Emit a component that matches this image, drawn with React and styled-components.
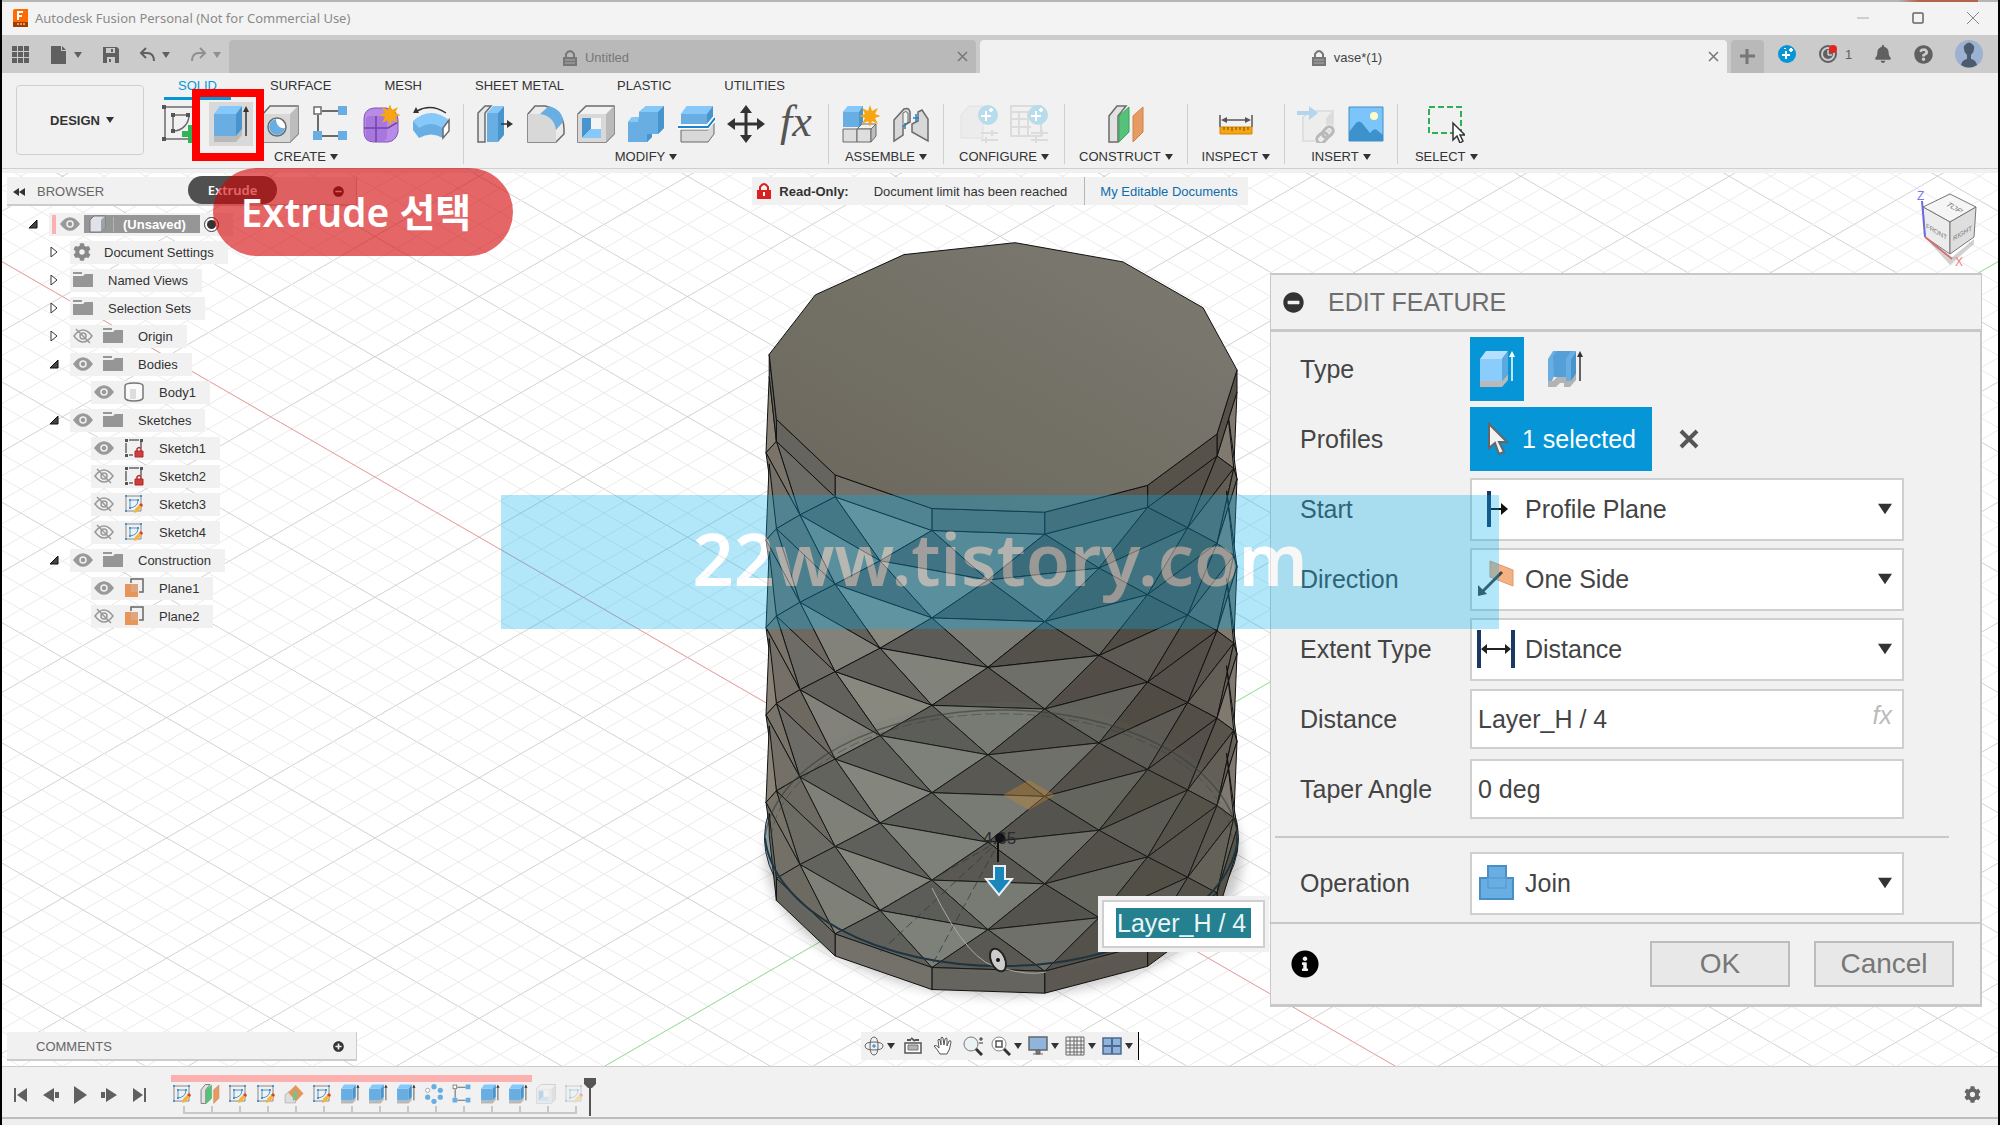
import React, { useState } from 'react';
import styled, { createGlobalStyle, css } from 'styled-components';
import { FaBell, FaCog, FaInfoCircle, FaMinusCircle, FaPlusCircle, FaQuestionCircle } from 'react-icons/fa';

const GlobalStyle = createGlobalStyle`
  * {
    box-sizing: border-box;
  }
  body {
    margin: 0;
    background: #000;
    color: #333;
    font-family: "Liberation Sans", Arial, sans-serif;
    font-size: 13px;
  }
  button, input, select {
    font: inherit;
    color: inherit;
  }
`;

const BLUE = '#68aee3';
const LIGHT = '#86c8fa';
const DEEP = '#4795cc';
const GREY = '#d8d8d8';
const LINE = '#6b6b6b';

/* ---------- icons ---------- */

const Icon = ({ size = 38, box = 38, children, ...rest }) => (
  <svg width={size} height={size} viewBox={`0 0 ${box} ${box}`} fill="none" aria-hidden="true" {...rest}>
    {children}
  </svg>
);

const Caret = ({ size = 8, color = '#333' }) => (
  <svg width={size} height={size} viewBox="0 0 8 8" aria-hidden="true">
    <path d="M0 1h8L4 7z" fill={color} />
  </svg>
);

const SketchIcon = (props) => (
  <Icon {...props}>
    <path d="M4 2h30M4 34h30M3 3v30" stroke={LINE} strokeWidth="1.5" />
    <path d="M11 10h16c0 9-7 16-16 16z" stroke={LINE} strokeWidth="1.5" />
    <path d="M0 0h4v4H0zM0 32h4v4H0zM9 8h4v4H9zM9 24h4v4H9zM24 8h4v4h-4z" fill="#555" />
    <path d="M26 20h6v6h6v6h-6v6h-6v-6h-6v-6h6z" fill="#2fb457" />
  </Icon>
);

const ExtrudeIcon = ({ arrow = '#333', front = BLUE, top = LIGHT, side = DEEP, ...props }) => (
  <Icon {...props}>
    <path d="M2 31h22l6-7v6l-6 7H2z" fill="#b9b9b9" />
    <path d="M2 9h22v22H2z" fill={front} />
    <path d="M2 9l6-8h22l-6 8z" fill={top} />
    <path d="M24 9l6-8v23l-6 7z" fill={side} />
    <path d="M34 31V5" stroke={arrow} strokeWidth="1.5" />
    <path d="M31 7l3-6 3 6z" fill={arrow} />
  </Icon>
);

const ThinExtrudeIcon = (props) => (
  <Icon {...props}>
    <path d="M2 31h5l4-4h11v4h3l5-7v6l-6 7h-6v-4h-4l-4 4H2z" fill="#b3b3b3" />
    <path d="M2 9l5-8h6v23H9l-3 7H2z" fill={BLUE} />
    <path d="M7 6l4-5h15l-5 7v19H8z" fill="#559fd9" />
    <path d="M20 9l5-8h5l-5 8v22h-5z" fill={BLUE} />
    <path d="M25 9l5-8v23l-5 7z" fill={DEEP} />
    <path d="M34 31V5" stroke="#333" strokeWidth="1.5" />
    <path d="M31 7l3-6 3 6z" fill="#333" />
  </Icon>
);

const HoleIcon = () => (
  <Icon>
    <path d="M1 9l7-8h28v28l-8 8H1z" fill="#ececec" stroke={LINE} strokeWidth="1.5" />
    <path d="M28 9l8-8v28l-8 8z" fill="#bcbcbc" />
    <path d="M1 9h27v28H1z" fill={GREY} />
    <circle cx="15" cy="22" r="9" fill="#fff" stroke={LINE} strokeWidth="1.5" />
    <path d="M14 14a8 8 0 1 0 9 9c-5 1-9-3-9-9z" fill={BLUE} />
  </Icon>
);

const PatternIcon = (props) => (
  <Icon {...props}>
    <path d="M10 6h16M6 10v16M10 31h16" stroke={LINE} strokeWidth="2" />
    <rect x="2" y="2" width="7" height="7" fill="#fff" stroke={LINE} strokeWidth="1.5" />
    <path d="M26 1h9v9h-9zM1 26h9v9H1zM26 26h9v9h-9z" fill={BLUE} />
  </Icon>
);

const Star = ({ x, y }) => (
  <path
    transform={`translate(${x} ${y})`}
    d="M0-10l2 6 6-3-3 6 6 2-6 2 3 6-6-3-2 6-2-6-6 3 3-6-6-2 6-2-3-6 6 3z"
    fill="#f7a511"
  />
);

const FormIcon = () => (
  <Icon>
    <path d="M2 14Q2 4 12 3h12q12 2 12 12v12q-2 9-10 10H12Q2 37 2 27z" fill="#b78be6" stroke="#8254b8" />
    <path d="M4 15q0-4 5-4h12q4 0 4 4v16q0 4-4 5H9q-5-1-5-5z" fill="#a877dd" />
    <path d="M14 11v26M2 23h24l10-6M26 12l6-6" stroke="#7444ab" strokeWidth="1.5" />
    <Star x={28} y={9} />
  </Icon>
);

const BendIcon = () => (
  <Icon>
    <path d="M1 16q18-16 37 0l-5 8q-13-9-27 0z" fill={LIGHT} />
    <path d="M1 16l6 7v10l-6-8zM7 23q12-8 24 0v10q-12-7-24 0z" fill={BLUE} />
    <path d="M31 23l6-8v11l-6 7z" fill="#fff" stroke={LINE} strokeWidth="1.5" />
    <path d="M5 6q14-8 29 2" stroke="#333" strokeWidth="1.5" />
    <path d="M1 8l3-6 3 6z" fill="#333" />
  </Icon>
);

const PressPullIcon = () => (
  <Icon>
    <path d="M1 8l7-7h6l-6 7v29H1z" fill="#e8e8e8" stroke={LINE} strokeWidth="1.5" />
    <path d="M10 8h11v29H10z" fill={BLUE} />
    <path d="M10 8l6-7h11l-6 7z" fill={LIGHT} />
    <path d="M21 8l6-7v29l-6 7z" fill={DEEP} />
    <path d="M24 19h8" stroke="#333" strokeWidth="1.5" />
    <path d="M30 15l6 4-6 4z" fill="#333" />
  </Icon>
);

const FilletIcon = () => (
  <Icon>
    <path d="M1 9l7-8h10q18 4 19 22v6l-8 8H1z" fill="#ebebeb" stroke={LINE} strokeWidth="1.5" />
    <path d="M1 9h12q15 2 16 16v12H1z" fill={GREY} />
    <path d="M13 9l9-8q14 4 14 16l-7 8Q27 11 13 9z" fill={BLUE} />
  </Icon>
);

const ShellIcon = (props) => (
  <Icon {...props}>
    <path d="M1 9l8-8h28v28l-8 8H1z" fill="#f2f2f2" stroke={LINE} strokeWidth="1.5" />
    <path d="M29 9l8-8v28l-8 8z" fill="#bababa" />
    <path d="M1 9h28v28H1z" fill={GREY} />
    <path d="M5 13h19v20H5z" fill="#f4f4f4" />
    <path d="M5 13h9v11l-9 9z" fill={DEEP} />
    <path d="M14 24h10v9H5z" fill={LIGHT} />
  </Icon>
);

const CombineIcon = () => (
  <Icon>
    <path d="M1 17l4-5h7V7l7-6h18v22l-6 6h-6v3l-5 5H1z" fill={BLUE} />
    <path d="M1 17l4-5h7l-1 5zM12 7l7-6h18l-6 6z" fill={LIGHT} />
    <path d="M31 7l6-6v22l-6 6zM20 29h5v3l-5 5z" fill={DEEP} />
  </Icon>
);

const SplitIcon = () => (
  <Icon>
    <path d="M4 9l6-8h26l-6 8v10H4z" fill={BLUE} />
    <path d="M4 9l6-8h26l-6 8z" fill={LIGHT} />
    <path d="M30 9l6-8v11l-6 7z" fill={DEEP} />
    <path d="M4 25h27l6-7v11l-6 8H4z" fill={GREY} stroke={LINE} />
    <path d="M1 22h30l7-9" stroke="#fff" strokeWidth="5" />
    <path d="M1 22h30l7-9" stroke="#1c83cc" strokeWidth="2" />
  </Icon>
);

const MoveIcon = () => (
  <Icon>
    <path d="M19 4v30M4 19h30" stroke="#333" strokeWidth="3" />
    <path d="M19 0l6 8H13zM19 38l6-8H13zM0 19l8-6v12zM38 19l-8-6v12z" fill="#333" />
  </Icon>
);

const AssembleIcon = () => (
  <Icon>
    <path d="M1 7l5-6h15l-4 6v15H1z" fill={BLUE} />
    <path d="M1 7l5-6h15l-4 6z" fill={LIGHT} />
    <path d="M17 7l4-6v16l-4 6z" fill={DEEP} />
    <path d="M1 24h14v13H1z" fill="#dedede" stroke={LINE} />
    <path d="M15 24l5-5h14l-5 5z" fill="#f1f1f1" stroke={LINE} />
    <path d="M15 24h14v13H15z" fill="#dedede" stroke={LINE} />
    <path d="M29 24l5-5v12l-5 6z" fill="#bdbdbd" stroke={LINE} />
    <Star x={28} y={10} />
  </Icon>
);

const JointIcon = () => (
  <Icon>
    <path d="M2 15L12 4q5-2 6 3v10l-7 4v9l-9 6z" fill={GREY} stroke={LINE} strokeWidth="1.5" />
    <path d="M11 8q3-3 5 0v9l-5 4z" fill="#f1f1f1" stroke={LINE} />
    <path d="M36 36V14L30 5l-4 2v9l-6 3v8z" fill={GREY} stroke={LINE} strokeWidth="1.5" />
    <path d="M13 18v6M24 9v8M21 13h6" stroke="#1c83cc" strokeWidth="1.5" />
  </Icon>
);

const ConfigureIcon = ({ table }) => (
  <Icon>
    {table ? (
      <path d="M1 1h30v30H1zM1 7h30M1 14h20M1 22h20M9 7v24M18 7v24" stroke="#dcdcdc" strokeWidth="2" />
    ) : (
      <path d="M1 10l8-9h14v32H1z" fill="#ececec" stroke="#e0e0e0" />
    )}
    <circle cx="28" cy="10" r="10" fill="#b9dcec" />
    <path d="M26 6v10M21 11h10M31 3v4M29 5h4" stroke="#fff" strokeWidth="2" />
    <path d="M21 28h17M21 35h17M32 25v6M26 32v6" stroke="#dcdcdc" strokeWidth="2" />
  </Icon>
);

const PlaneIcon = (props) => (
  <Icon {...props}>
    <path d="M2 11l8-10h9l-8 10v26H2z" fill="#e2e2e2" stroke={LINE} strokeWidth="1.5" />
    <path d="M12 11l10-9v25l-10 10z" fill="#56c279" stroke="#3aa35d" />
    <path d="M26 11l10-9v25L26 37z" fill="#e89a63" stroke="#cf814b" />
  </Icon>
);

const InspectIcon = () => (
  <Icon>
    <path d="M3 10v12M35 10v12M6 15h26" stroke="#555" strokeWidth="1.5" />
    <path d="M4 15l6-3v6zM34 15l-6-3v6z" fill="#555" />
    <path d="M3 22h32v7H3z" fill="#f7a511" stroke="#d58500" />
    <path d="M7 22v3M11 22v3M15 22v4M19 22v3M23 22v3M27 22v4M31 22v3" stroke="#7a5200" />
  </Icon>
);

const InsertIcon = () => (
  <Icon>
    <path d="M6 12l8-6h22v22l-7 8H6z" fill="#ededed" stroke="#dadada" strokeWidth="1.5" />
    <path d="M29 13l7-7v22l-7 8z" fill="#dcdcdc" />
    <path d="M0 6h12V1l9 7-9 7v-5H0z" fill="#b5d5ec" />
    <g transform="rotate(-45 28 30)" stroke="#f1f1f1" strokeWidth="5">
      <rect x="18" y="26" width="12" height="8" rx="4" />
      <rect x="26" y="26" width="12" height="8" rx="4" />
    </g>
    <g transform="rotate(-45 28 30)" stroke="#b9b9b9" strokeWidth="3">
      <rect x="18" y="26" width="12" height="8" rx="4" />
      <rect x="26" y="26" width="12" height="8" rx="4" />
    </g>
  </Icon>
);

const ImageIcon = () => (
  <Icon>
    <path d="M2 2h34v34H2z" fill="#7cc5fb" stroke="#3f8fc9" />
    <path d="M2 27l7-9q3-3 6 0l8 10 3-3q3-2 5 1l5 4v6H2z" fill="#3e92cc" />
    <circle cx="27" cy="11" r="4" fill="#fffcc7" />
  </Icon>
);

const SelectIcon = () => (
  <Icon>
    <path d="M2 2h32v26H2z" stroke="#2fae55" strokeWidth="2" strokeDasharray="6 3" />
    <path d="M26 18v17l4-4 3 7 3-2-3-6h5z" fill="#fff" stroke="#333" strokeWidth="1.5" />
  </Icon>
);

const SketchSmall = ({ faded }) => (
  <Icon size={20} box={20} opacity={faded ? 0.35 : 1}>
    <path d="M2 2h15v15H2z" stroke="#888" />
    <path d="M6 6h8q0 7-8 8z" stroke="#4795cc" />
    <path d="M1 1h2v2H1zM16 1h2v2h-2zM1 16h2v2H1zM5 5h2v2H5zM13 5h2v2h-2zM5 13h2v2H5z" fill="#4795cc" />
    <path d="M10 19l1-4 5-5 2 3-5 5z" fill="#f6b43c" />
    <path d="M15 11l2-2 2 2-1 2z" fill="#d9402f" />
  </Icon>
);

const SketchLocked = () => (
  <Icon size={20} box={20}>
    <path d="M5 2h10M2 5v10M17 4v6M5 17h4" stroke="#666" strokeWidth="1.5" />
    <path d="M1 1h3v3H1zM16 1h3v3h-3zM1 16h3v3H1z" fill="#555" />
    <path d="M13 13v-2q2-3 4 0v2" stroke="#b52f2f" strokeWidth="1.5" />
    <path d="M11 13h8v6h-8z" fill="#d33c3c" stroke="#a92b2b" />
  </Icon>
);

const PlaneSmall = () => (
  <Icon size={20} box={20}>
    <path d="M7 5V1h12v13h-4" stroke="#666" strokeWidth="1.5" />
    <path d="M1 6h13v13H1z" fill="#e8955b" />
    <path d="M7 6h7v8H7z" fill="#dfa57f" />
  </Icon>
);

const BodySmall = () => (
  <Icon size={20} box={20}>
    <path d="M1 4q0-3 9-3t9 3v12q-1 3-9 3t-9-3z" fill="#fafafa" stroke="#777" strokeWidth="1.5" />
    <path d="M6 7h6v10H6z" fill="#ddd" />
  </Icon>
);

const Folder = () => (
  <Icon size={20} box={20}>
    <path d="M0 2h9v2H0zM0 6h10l2-2h8v13H0z" fill="#969696" />
  </Icon>
);

const Eye = ({ off }) => (
  <Icon size={20} box={20}>
    <path d="M1 10q9-12 18 0-9 12-18 0z" fill={off ? 'none' : '#999'} stroke="#999" strokeWidth="1.5" />
    <circle cx="10" cy="10" r="3" fill={off ? 'none' : '#999'} stroke={off ? '#999' : '#f1f1f1'} strokeWidth="1.5" />
    {off && <path d="M3 3l14 14" stroke="#999" strokeWidth="1.5" />}
  </Icon>
);

const Lock = ({ color = '#777', size = 18, plain }) => (
  <Icon size={size} box={18}>
    <path d="M5 8V5q4-6 8 0v3" stroke={color} strokeWidth="2" />
    <path d="M2 8h14v9H2z" fill={color} />
    {plain ? (
      <path d="M9 10v4" stroke="#fff" strokeWidth="2" />
    ) : (
      <path d="M4 11h10M4 14h10" stroke="#fff" opacity=".4" />
    )}
  </Icon>
);

const CubeSmall = () => (
  <Icon size={18} box={18}>
    <path d="M2 5l4-4h11v11l-4 5H2z" fill="#dfe3e8" stroke="#777" />
    <path d="M13 5l4-4v11l-4 5z" fill="#9da3ab" />
  </Icon>
);

const CursorIcon = ({ size = 34 }) => (
  <Icon size={size} box={34}>
    <path d="M9 2v24l6-5 4 11 5-2-5-10h8z" fill="#f1f1f1" stroke="#666" strokeWidth="2" />
  </Icon>
);

/* ---------- title and document tabs ---------- */

const Window = styled.div`
  display: flex;
  flex-direction: column;
  min-height: 100vh;
  margin: 0 2px;
  background: #f1f1f1;
`;

const Backdrop = styled.div`
  height: 2px;
  background: linear-gradient(to right, #b5b5b5 95%, #b5644c 96%, #b5644c 99%, #b5b5b5 99%);
`;

const TitleBar = styled.header`
  display: flex;
  align-items: center;
  gap: 5px;
  height: 33px;
  padding: 0 8px 2px 10px;
  border-radius: 8px 8px 0 0;
  background: #f3f3f3;
  color: #8a8a8a;
  font-family: "Noto Sans", "Open Sans", sans-serif;
`;

const AppTitle = styled.h1`
  flex: 1;
  margin: 0;
  font-size: 13px;
  font-weight: 400;
`;

const WindowButton = styled.button`
  display: flex;
  justify-content: center;
  width: 34px;
  margin-left: 16px;
  padding: 0;
  border: 0;
  background: none;
`;

const TabBar = styled.div`
  display: flex;
  align-items: stretch;
  height: 38px;
  padding-top: 5px;
  background: #cbcbcb;
`;

const QuickTools = styled.div`
  display: flex;
  align-items: center;
  width: 227px;
  padding: 0 8px 4px 10px;
  justify-content: space-between;
`;

const QuickButton = styled.button`
  display: flex;
  align-items: center;
  gap: 6px;
  padding: 0;
  border: 0;
  background: none;
  opacity: ${(p) => (p.$dim ? 0.55 : 1)};
`;

const DocTab = styled.div`
  display: flex;
  flex: 1;
  align-items: center;
  justify-content: center;
  gap: 6px;
  padding: 0 8px 0 10px;
  margin-right: 4px;
  border-radius: 4px 4px 0 0;
  background: ${(p) => (p.$active ? '#f1f1f1' : '#b9b9b9')};
  color: ${(p) => (p.$active ? '#444' : '#777')};

  span {
    display: flex;
    flex: 1;
    align-items: center;
    justify-content: center;
    gap: 6px;
    padding-top: 2px;
  }
`;

const PlainButton = styled.button`
  display: flex;
  align-items: center;
  justify-content: center;
  padding: 0;
  border: 0;
  background: none;
`;

const NewTab = styled(PlainButton)`
  width: 33px;
  border-radius: 4px 4px 0 0;
  background: #b9b9b9;
`;

const Account = styled.div`
  display: flex;
  align-items: center;
  justify-content: space-between;
  width: 234px;
  padding: 0 15px 5px 13px;
  color: #606060;
`;

const Close = () => (
  <Icon size={11} box={11}>
    <path d="M1 1l9 9M10 1l-9 9" stroke="#777" strokeWidth="1.5" />
  </Icon>
);

const TopBars = () => (
  <>
    <Backdrop />
    <TitleBar>
      <Icon size={18} box={18}>
        <path d="M1 2q0-2 2-2h13v18H1z" fill="#ff6b00" />
        <path d="M1 13h15v5H1z" fill="#a43c00" />
        <path d="M6 11V3h5M6 7h4" stroke="#fff" strokeWidth="2" />
        <path d="M5 15h8" stroke="#fff" strokeDasharray="2 1" />
      </Icon>
      <AppTitle>Autodesk Fusion Personal (Not for Commercial Use)</AppTitle>
      <WindowButton aria-label="Minimize">
        <Icon size={12} box={12}><path d="M0 6h12" stroke="#aaa" /></Icon>
      </WindowButton>
      <WindowButton aria-label="Maximize">
        <Icon size={12} box={12}><rect x="1" y="1" width="10" height="10" rx="1" stroke="#666" strokeWidth="1.5" /></Icon>
      </WindowButton>
      <WindowButton aria-label="Close">
        <Icon size={12} box={12}><path d="M0 0l12 12M12 0L0 12" stroke="#888" /></Icon>
      </WindowButton>
    </TitleBar>
    <TabBar>
      <QuickTools>
        <QuickButton aria-label="Data panel">
          <Icon size={18} box={18}>
            <path d="M0 0h5v5H0zM6 0h5v5H6zM12 0h5v5h-5zM0 6h5v5H0zM6 6h5v5H6zM12 6h5v5h-5zM0 12h5v5H0zM6 12h5v5H6zM12 12h5v5h-5z" fill="#606060" />
          </Icon>
        </QuickButton>
        <QuickButton aria-label="File">
          <Icon size={18} box={18}>
            <path d="M1 0h10v5h5v13H1z" fill="#606060" />
            <path d="M12 0l4 4h-4z" fill="#606060" />
          </Icon>
          <Caret color="#606060" />
        </QuickButton>
        <QuickButton aria-label="Save">
          <Icon size={18} box={18}>
            <path d="M1 1h14l2 2v14H1z" fill="#606060" />
            <path d="M4 2h9v5H4zM5 11h8v6H5z" fill="#cbcbcb" />
            <path d="M10 3v3M8 13v3" stroke="#606060" strokeWidth="2" />
          </Icon>
        </QuickButton>
        <QuickButton aria-label="Undo">
          <Icon size={17} box={17}>
            <path d="M7 2L2 7l5 5M2 7h6q7 0 7 8" stroke="#606060" strokeWidth="2" />
          </Icon>
          <Caret color="#606060" />
        </QuickButton>
        <QuickButton aria-label="Redo" $dim>
          <Icon size={17} box={17}>
            <path d="M10 2l5 5-5 5M15 7H9q-7 0-7 8" stroke="#606060" strokeWidth="2" />
          </Icon>
          <Caret color="#606060" />
        </QuickButton>
      </QuickTools>
      <DocTab>
        <span><Lock />Untitled</span>
        <PlainButton aria-label="Close Untitled"><Close /></PlainButton>
      </DocTab>
      <DocTab $active>
        <span><Lock />vase*(1)</span>
        <PlainButton aria-label="Close vase"><Close /></PlainButton>
      </DocTab>
      <NewTab aria-label="New tab">
        <Icon size={15} box={15}><path d="M7 0v15M0 7h15" stroke="#777" strokeWidth="3" /></Icon>
      </NewTab>
      <Account>
        <PlainButton aria-label="Extensions">
          <Icon size={20} box={20}>
            <circle cx="10" cy="10" r="9" fill="#0696d7" />
            <path d="M9 7v8M5 11h8M14 4v4M12 6h4M8 4v1" stroke="#fff" strokeWidth="2" />
          </Icon>
        </PlainButton>
        <QuickButton aria-label="Job status">
          <Icon size={20} box={20}>
            <circle cx="9" cy="10" r="8" stroke="#606060" strokeWidth="2" />
            <circle cx="9" cy="10" r="5" fill="#606060" />
            <path d="M9 6v5h4" stroke="#fff" />
            <circle cx="14" cy="5" r="4" fill="#e8231f" />
          </Icon>
          1
        </QuickButton>
        <PlainButton aria-label="Notifications"><FaBell size={18} /></PlainButton>
        <PlainButton aria-label="Help"><FaQuestionCircle size={19} /></PlainButton>
        <PlainButton aria-label="Account">
          <Icon size={28} box={28}>
            <circle cx="14" cy="14" r="14" fill="#9db1d0" />
            <path d="M6 25q1-5 6-6v-4Q8 11 9 6q5-7 10 0 1 5-3 9v4q5 1 6 6-8 5-16 0z" fill="#4c5a6e" />
          </Icon>
        </PlainButton>
      </Account>
    </TabBar>
  </>
);

/* ---------- ribbon ---------- */

const Ribbon = styled.nav`
  display: flex;
  height: 100px;
  padding-bottom: 4px;
  background: #f1f1f1;
`;

const RibbonInner = styled.div`
  display: flex;
  flex: 1;
  border-bottom: 1px solid #cfcfcf;
`;

const Workspace = styled.button`
  display: flex;
  align-items: center;
  justify-content: center;
  gap: 6px;
  width: 128px;
  height: 70px;
  margin: 12px 0 0 14px;
  padding: 0 0 0 4px;
  border: 1px solid #cfcfcf;
  border-radius: 4px;
  background: none;
  font-weight: 700;
`;

const RibbonTabs = styled.div`
  display: flex;
  gap: 25px;
  height: 27px;
  padding-left: 20px;
`;

const RibbonTab = styled.button`
  padding: 0 14px;
  border: 0;
  border-bottom: 3px solid ${(p) => (p.$active ? '#0696d7' : 'transparent')};
  background: none;
  color: ${(p) => (p.$active ? '#0696d7' : '#333')};
`;

const Groups = styled.div`
  display: flex;
  padding: 4px 0 0 5px;
`;

const Group = styled.section`
  display: flex;
  flex-direction: column;
  align-items: center;
  gap: 7px;
  height: 60px;
  padding: 1px ${(p) => p.$pad}px 0;
  border-right: ${(p) => (p.$last ? 0 : 1)}px solid #cfcfcf;
`;

const Tools = styled.div`
  display: flex;
  gap: 12px;
`;

const Tool = styled.button`
  position: relative;
  display: flex;
  width: 38px;
  height: 38px;
  padding: 0;
  border: 0;
  background: none;
  ${(p) => p.$hot && css`
    z-index: 2;
    background: #d9d9d9;
    box-shadow: 0 0 0 3px #d9d9d9;
  `}
`;

const Highlight = styled.i`
  position: absolute;
  top: -16px;
  left: -20px;
  width: 72px;
  height: 72px;
  border: 8px solid #fe0000;
`;

const Fx = styled.i`
  width: 38px;
  color: #555;
  font: italic 44px/34px "Liberation Serif", serif;
`;

const GroupLabel = styled.button`
  display: flex;
  align-items: center;
  gap: 4px;
  padding: 0;
  border: 0;
  background: none;
  line-height: 14px;
`;

const groups = [
  { name: 'CREATE', pad: 13, tools: [['Sketch', <SketchIcon />], ['Extrude', <ExtrudeIcon />, true], ['Hole', <HoleIcon />], ['Pattern', <PatternIcon />], ['Form', <FormIcon />], ['Bend', <BendIcon />]] },
  { name: 'MODIFY', pad: 13, tools: [['Press Pull', <PressPullIcon />], ['Fillet', <FilletIcon />], ['Shell', <ShellIcon />], ['Combine', <CombineIcon />], ['Split', <SplitIcon />], ['Move', <MoveIcon />], ['Parameters', <Fx>fx</Fx>]] },
  { name: 'ASSEMBLE', pad: 13, tools: [['Component', <AssembleIcon />], ['Joint', <JointIcon />]] },
  { name: 'CONFIGURE', pad: 15, tools: [['Configure', <ConfigureIcon />], ['Table', <ConfigureIcon table />]] },
  { name: 'CONSTRUCT', pad: 14, tools: [['Plane', <PlaneIcon />]] },
  { name: 'INSPECT', pad: 14, tools: [['Measure', <InspectIcon />]] },
  { name: 'INSERT', pad: 12, tools: [['Derive', <InsertIcon />], ['Canvas', <ImageIcon />]] },
  { name: 'SELECT', pad: 17, tools: [['Select', <SelectIcon />]] },
];

const ribbonTabs = ['SOLID', 'SURFACE', 'MESH', 'SHEET METAL', 'PLASTIC', 'UTILITIES'];

const RibbonBar = () => {
  const [tab, setTab] = useState('SOLID');

  return (
    <Ribbon>
      <RibbonInner>
        <Workspace>DESIGN <Caret /></Workspace>
        <div>
          <RibbonTabs>
            {ribbonTabs.map((name) => (
              <RibbonTab key={name} $active={tab === name} onClick={() => setTab(name)}>{name}</RibbonTab>
            ))}
          </RibbonTabs>
          <Groups>
            {groups.map((group, index) => (
              <Group key={group.name} $pad={group.pad} $last={index === groups.length - 1}>
                <Tools>
                  {group.tools.map(([label, icon, hot]) => (
                    <Tool key={label} aria-label={label} $hot={hot}>
                      {icon}
                      {hot && <Highlight />}
                    </Tool>
                  ))}
                </Tools>
                <GroupLabel>{group.name}<Caret size={8} /></GroupLabel>
              </Group>
            ))}
          </Groups>
        </div>
      </RibbonInner>
    </Ribbon>
  );
};

/* ---------- model canvas ---------- */

const CanvasSvg = styled.svg`
  position: absolute;
  inset: 0;
  width: 100%;
  height: 100%;
  background: #fff;
`;

const SLOPE = 0.5774;
const SIDES = 13;
const CX = 1001.5;
const RX = 236;
const RY = 136;

const ring = (cy, half) =>
  Array.from({ length: SIDES }, (_, k) => {
    const deg = -86.7 + (k + (half ? 0.5 : 0)) * (360 / SIDES);
    const a = (deg * Math.PI) / 180;
    return { x: CX + RX * Math.cos(a), y: cy + RY * Math.sin(a), deg };
  });

// [angle round the body, r, g, b]
const lightStops = [[-20, 150, 143, 130], [5, 140, 133, 122], [20, 104, 99, 90], [38, 84, 80, 73], [65, 100, 99, 92], [93, 122, 123, 117], [121, 136, 136, 127], [135, 130, 130, 122], [150, 107, 105, 99], [165, 118, 113, 104], [180, 145, 138, 125], [240, 150, 143, 130]];
const darkStops = [[-20, 120, 114, 103], [5, 110, 104, 94], [25, 88, 83, 74], [50, 80, 75, 67], [80, 84, 80, 74], [107, 92, 91, 87], [135, 98, 97, 91], [155, 114, 108, 99], [175, 132, 126, 114], [240, 140, 133, 120]];

const shade = (stops, deg) => {
  const i = Math.max(1, stops.findIndex((s) => s[0] >= deg));
  const [a, b] = [stops[i - 1], stops[i]];
  const t = Math.max(0, (deg - a[0]) / (b[0] - a[0]));
  return `rgb(${[1, 2, 3].map((n) => Math.round(a[n] + (b[n] - a[n]) * t)).join(',')})`;
};

const points = (list) => list.map((p) => `${p.x.toFixed(1)},${p.y.toFixed(1)}`).join(' ');
const area = (a, b, c) => (b.x - a.x) * (c.y - a.y) - (c.x - a.x) * (b.y - a.y);

const buildFacets = () => {
  const facets = [];
  // faces that look away from the camera are left out
  const add = (stops, deg, list) => {
    if (area(list[0], list[1], list[2]) <= 0) return;
    facets.push({ points: points(list), fill: shade(stops, deg) });
  };
  const at = (list, k) => list[(k + SIDES) % SIDES];
  const step = 180 / SIDES;
  for (let layer = 0; layer < 10; layer++) {
    const odd = layer % 2 === 1;
    const upper = ring(400.5 + layer * 43.7, odd);
    const lower = ring(400.5 + (layer + 1) * 43.7, !odd);
    for (let k = 0; k < SIDES; k++) {
      const below = at(lower, odd ? k + 1 : k);
      add(lightStops, upper[k].deg + step, [upper[k], below, at(upper, k + 1)]);
      add(darkStops, upper[k].deg, [upper[k], at(lower, odd ? k : k - 1), below]);
    }
  }
  [378.5, 837.5].forEach((cy) => {
    const upper = ring(cy, false);
    const lower = ring(cy + 22, false);
    for (let k = 0; k < SIDES; k++) {
      const next = (k + 1) % SIDES;
      const deg = upper[k].deg + step;
      if (upper[next].x < upper[k].x) {
        facets.push({
          points: points([upper[k], lower[k], lower[next], upper[next]]),
          fill: deg > 135 ? '#66645e' : deg > 108 ? '#73716a' : deg > 80 ? '#65645e' : deg > 50 ? '#5c5851' : '#565149',
        });
      }
    }
  });
  return facets;
};

const facets = buildFacets();
const topFace = points(ring(378.5, false));

const gridLines = [];
for (let n = -60; n < 100; n++) {
  const shift = n * 24.06;
  const major = n % 5 === 0;
  gridLines.push({ y1: 140.2 + shift, y2: 140.2 + shift + 2000 * SLOPE, major });
  gridLines.push({ y1: 573.2 + shift, y2: 573.2 + shift - 2000 * SLOPE, major });
}

const Canvas = () => (
  <CanvasSvg viewBox="2 173 1996 893" preserveAspectRatio="xMidYMin slice" role="img" aria-label="Vase model">
    <defs>
      <linearGradient id="topFace" x1="0" y1="1" x2="1" y2="0">
        <stop offset="0" stopColor="#6b675b" />
        <stop offset="1" stopColor="#7c7a72" />
      </linearGradient>
      <filter id="soft"><feGaussianBlur stdDeviation="6" /></filter>
    </defs>
    {gridLines.map((line, index) => (
      <line key={index} x1="0" x2="2000" y1={line.y1} y2={line.y2} stroke={line.major ? '#d2d2d2' : '#ebebeb'} />
    ))}
    <line x1="0" y1="260.5" x2="2000" y2="1415.3" stroke="#f2a3a3" />
    <line x1="0" y1="1415.3" x2="2000" y2="260.5" stroke="#9ae69a" />
    <ellipse cx="1004" cy="858" rx="238" ry="138" fill="#000" opacity=".22" filter="url(#soft)" />
    <ellipse cx={CX} cy="838" rx="237" ry="137" fill="#93a5ae" stroke="#1d2d38" />
    <g stroke="#111" strokeWidth="1" strokeLinejoin="round">
      {facets.map((facet, index) => (
        <polygon key={index} points={facet.points} fill={facet.fill} />
      ))}
      <polygon points={topFace} fill="url(#topFace)" />
    </g>
    <ellipse cx={CX} cy="838" rx="235" ry="136" fill="#5f7570" opacity=".09" />
    <path d="M765 838a237 137 0 0 1 473 0" fill="none" stroke="#3c3c38" opacity=".6" strokeWidth="1.5" />
    <path d="M771 838a231 133 0 0 1 461 0" fill="none" stroke="#3c3c38" opacity=".5" strokeDasharray="10 4" />
    <path d="M765 838a237 137 0 0 0 473 0" fill="none" stroke="#1f3440" strokeWidth="2" />
    <path d="M1000 840L880 910M1000 840L880 952M1000 840L932 965" stroke="#333" strokeDasharray="8 4" opacity=".7" />
    <path d="M932 888q38 78 70 80 26 8 44 4" fill="none" stroke="#aaa" />
    <path d="M1003 795l26-15 26 15-26 15z" fill="#c58a32" opacity=".38" />
    <text x="983" y="844" fontSize="17" fill="#2b2b2b">4.65</text>
    <circle cx="1000" cy="838" r="5" fill="#141019" />
    <path d="M998 838v24" stroke="#111" strokeWidth="2" />
    <path d="M994 866h11v13h7l-13 16-13-16h8z" fill="#1b86bb" stroke="#e8f0f4" strokeWidth="2" />
    <ellipse cx="998" cy="960" rx="7" ry="12" transform="rotate(-24 998 960)" fill="#ccc" stroke="#222" strokeWidth="2" />
    <circle cx="998" cy="960" r="2" fill="#111" />
  </CanvasSvg>
);

const ViewCube = styled.svg`
  display: block;
  width: 84px;
  height: 100px;
  margin-left: auto;
`;

/* ---------- browser tree ---------- */

const Viewport = styled.main`
  position: relative;
  display: grid;
  flex: 1;
  grid-template-columns: minmax(0, 1fr) auto minmax(0, 1fr);
  grid-template-rows: 1fr auto;
`;

const Column = styled.div`
  position: relative;
`;

const SideHeader = styled.div`
  position: relative;
  display: flex;
  align-items: center;
  gap: 12px;
  width: 350px;
  height: 29px;
  margin: ${(p) => (p.$bottom ? '0 0 5px 5px' : '4px 0 0 5px')};
  padding: 2px 12px 0 ${(p) => (p.$bottom ? 29 : 6)}px;
  border: 1px solid #ccc;
  border-width: 0 1px 2px 0;
  background: #f1f1f1;
  color: #666;

  span {
    flex: 1;
  }
`;

const Tree = styled.ul`
  display: flex;
  flex-direction: column;
  align-items: flex-start;
  gap: 4px;
  margin: 0;
  padding: 6px 0 0 26px;
  list-style: none;
`;

const TreeRow = styled.li`
  display: flex;
  align-items: center;
  height: 24px;
  padding-left: ${(p) => p.$indent}px;
`;

const Toggle = styled.button`
  display: flex;
  width: 21px;
  padding: 0;
  border: 0;
  background: none;
`;

const RowBody = styled.div`
  display: flex;
  align-items: center;
  gap: ${(p) => p.$gap || 10}px;
  height: 23px;
  padding: 0 14px 0 3px;
  background: #f1f1f1;
  white-space: nowrap;
`;

const RootName = styled.span`
  display: flex;
  align-items: center;
  height: 18px;
  background: #969696;
  color: #fff;
  font-weight: 700;

  svg {
    margin: 0 7px 0 4px;
  }
  b {
    padding: 0 14px 0 9px;
    border-left: 1px solid #b5b5b5;
  }
`;

const PinkBar = styled.i`
  width: 4px;
  height: 19px;
  background: #fdb0b0;
`;

const ActiveRadio = styled.input`
  width: 15px;
  height: 15px;
  margin: 0;
  accent-color: #333;
`;

const Name = styled.span`
  padding-left: ${(p) => p.$pad || 0}px;
`;

const tree = [
  { name: 'Document Settings', level: 1, icon: <FaCog size={18} color="#888" />, pad: 3 },
  { name: 'Named Views', level: 1, icon: <Folder />, pad: 5 },
  { name: 'Selection Sets', level: 1, icon: <Folder />, pad: 5 },
  { name: 'Origin', level: 1, icon: <Folder />, eye: 'off', pad: 5 },
  { name: 'Bodies', level: 1, icon: <Folder />, eye: 'on', open: true, pad: 5 },
  { name: 'Body1', level: 2, icon: <BodySmall />, eye: 'on', pad: 5 },
  { name: 'Sketches', level: 1, icon: <Folder />, eye: 'on', open: true, pad: 5 },
  { name: 'Sketch1', level: 2, icon: <SketchLocked />, eye: 'on', pad: 5 },
  { name: 'Sketch2', level: 2, icon: <SketchLocked />, eye: 'off', pad: 5 },
  { name: 'Sketch3', level: 2, icon: <SketchSmall />, eye: 'off', pad: 5 },
  { name: 'Sketch4', level: 2, icon: <SketchSmall />, eye: 'off', pad: 5 },
  { name: 'Construction', level: 1, icon: <Folder />, eye: 'on', open: true, pad: 5 },
  { name: 'Plane1', level: 2, icon: <PlaneSmall />, eye: 'on', pad: 5 },
  { name: 'Plane2', level: 2, icon: <PlaneSmall />, eye: 'off', pad: 5 },
];

const Arrow = ({ open }) => (
  <Icon size={10} box={10}>
    {open ? <path d="M9 1v8H1z" fill="#444" stroke="#111" /> : <path d="M2 0v10l6-5z" fill="#fff" stroke="#333" />}
  </Icon>
);

const Browser = () => (
  <Column>
    <SideHeader>
      <Icon size={12} box={12}><path d="M6 2v8L0 6zM12 2v8L6 6z" fill="#333" /></Icon>
      <span>BROWSER</span>
      <FaMinusCircle size={11} color="#333" />
    </SideHeader>
    <Tree>
      <TreeRow $indent={0}>
        <Toggle aria-label="Toggle root"><Arrow open /></Toggle>
        <RowBody $gap={4}>
          <PinkBar />
          <Eye />
          <RootName><CubeSmall /><b>(Unsaved)</b></RootName>
          <ActiveRadio type="radio" aria-label="Active component" defaultChecked />
        </RowBody>
      </TreeRow>
      {tree.map((node) => (
        <TreeRow key={node.name} $indent={node.level === 2 ? 42 : 21}>
          {node.level === 1 && <Toggle aria-label={`Toggle ${node.name}`}><Arrow open={node.open} /></Toggle>}
          {node.level === 2 && <Name $pad={21} />}
          <RowBody>
            {node.eye && <Eye off={node.eye === 'off'} />}
            {node.icon}
            <Name $pad={node.pad}>{node.name}</Name>
          </RowBody>
        </TreeRow>
      ))}
    </Tree>
  </Column>
);

/* ---------- notice and navigation bar ---------- */

const Notice = styled.div`
  display: flex;
  align-items: center;
  height: 28px;
  margin-top: 4px;
  padding: 0 10px 0 3px;
  background: #f1f1f1;
  white-space: nowrap;

  b {
    margin: 0 25px 0 6px;
  }
  a {
    display: flex;
    align-items: center;
    height: 28px;
    margin-left: 17px;
    padding-left: 15px;
    border-left: 1px solid #b5b5b5;
    color: #0e6cab;
    text-decoration: none;
  }
`;

const NavBar = styled.div`
  position: relative;
  display: flex;
  align-items: center;
  align-self: start;
  justify-self: center;
  justify-content: space-between;
  width: 278px;
  height: 28px;
  padding: 0 5px 0 3px;
  border-right: 1px solid #000;
  background: #f1f1f1;
`;

const NavButton = styled(PlainButton)`
  gap: 3px;
  min-width: 24px;
`;

const NavTools = () => (
  <NavBar>
    <NavButton aria-label="Orbit">
      <Icon size={20} box={20}>
        <path d="M1 10q0-4 9-4t9 4-9 4-9-4zM10 1q4 0 4 9t-4 9-4-9 4-9z" stroke="#666" />
        <path d="M10 8v4M8 10h4" stroke="#1c83cc" />
      </Icon>
      <Caret />
    </NavButton>
    <NavButton aria-label="Look at">
      <Icon size={20} box={20}>
        <path d="M2 7h16v10H2z" fill="#fff" stroke="#555" strokeWidth="1.5" />
        <path d="M5 9h10v5H5z" fill="#aeb4ba" stroke="#777" />
        <path d="M4 4h4M8 2l4 3M12 4h4" stroke="#555" strokeWidth="2" />
      </Icon>
    </NavButton>
    <NavButton aria-label="Pan">
      <Icon size={20} box={20}>
        <path d="M7 18q-3-5-6-8 2-2 5 2L5 4q1-2 2 0l1 5V2q1-2 2 0l1 7 1-6q2-2 2 0v7l2-5q2-1 2 1-1 8-4 12z" fill="#fff" stroke="#555" />
      </Icon>
    </NavButton>
    <NavButton aria-label="Zoom">
      <Icon size={20} box={20}>
        <circle cx="8" cy="8" r="7" fill="#e9f3f3" stroke="#777" />
        <path d="M13 13l6 6" stroke="#333" strokeWidth="3" />
        <path d="M18 1v4M16 3h4M16 7h4" stroke="#333" />
      </Icon>
    </NavButton>
    <NavButton aria-label="Fit">
      <Icon size={20} box={20}>
        <circle cx="8" cy="8" r="7" fill="#fff" stroke="#888" />
        <path d="M5 5h6v6H5z" stroke="#555" strokeWidth="1.5" />
        <path d="M13 13l6 6" stroke="#333" strokeWidth="3" />
      </Icon>
      <Caret />
    </NavButton>
    <NavButton aria-label="Display settings">
      <Icon size={20} box={20}>
        <path d="M1 1h18v13H1z" fill="#8fb4dd" stroke="#666" strokeWidth="1.5" />
        <path d="M8 14h4v4H8zM5 18h10" fill="#777" stroke="#666" />
      </Icon>
      <Caret />
    </NavButton>
    <NavButton aria-label="Grid">
      <Icon size={20} box={20}>
        <path d="M1 1h18v18H1zM5 1v18M9 1v18M12 1v18M16 1v18M1 5h18M1 9h18M1 12h18M1 16h18" stroke="#666" />
      </Icon>
      <Caret />
    </NavButton>
    <NavButton aria-label="Viewports">
      <Icon size={20} box={20}>
        <path d="M1 2h18v16H1z" fill="#8fb4dd" stroke="#4d6a8c" strokeWidth="1.5" />
        <path d="M10 2v16M1 10h18" stroke="#4d6a8c" strokeWidth="2" />
      </Icon>
      <Caret />
    </NavButton>
  </NavBar>
);

/* ---------- edit feature panel ---------- */

const Panel = styled.form`
  width: 712px;
  max-width: 100%;
  margin: 0 0 0 auto;
  color: #444;
  font-size: 25px;
`;

const RightColumn = styled(Column)`
  padding-right: 16px;
`;

const PanelHeader = styled.div`
  display: flex;
  align-items: center;
  gap: 24px;
  height: 59px;
  padding-left: 12px;
  border: solid #c8c8c8;
  border-width: 2px 1px 3px;
  background: #f1f1f1;
  color: #6e6e6e;
`;

const PanelBody = styled.div`
  display: flex;
  flex-direction: column;
  gap: 6px;
  padding: 5px 76px 7px 29px;
  border: solid #c8c8c8;
  border-width: 0 2px 2px 1px;
  background: #f1f1f1;
`;

const Row = styled.div`
  display: flex;
  align-items: center;
  height: 64px;
`;

const RowLabel = styled.label`
  width: 170px;
`;

const Field = styled.div`
  position: relative;
  flex: 1;
`;

const Select = styled.select`
  width: 100%;
  height: 63px;
  padding: 0 40px 0 53px;
  border: 2px solid #cfcfcf;
  border-radius: 0;
  background: #fff;
  appearance: none;
`;

const FieldIcon = styled.span`
  position: absolute;
  top: 12px;
  left: 7px;
  display: flex;
  pointer-events: none;
`;

const FieldCaret = styled.span`
  position: absolute;
  top: 24px;
  right: 12px;
  display: flex;
  pointer-events: none;
`;

const TextInput = styled.input`
  width: 100%;
  height: 60px;
  padding: 0 6px;
  border: 2px solid #cfcfcf;
  background: #fff;
`;

const FxHint = styled.i`
  position: absolute;
  top: 12px;
  right: 12px;
  color: #bbb;
`;

const TypeButton = styled.button`
  display: flex;
  align-items: center;
  justify-content: center;
  width: 54px;
  height: 64px;
  margin-right: 14px;
  padding: 0;
  border: 0;
  background: ${(p) => (p.$active ? '#0696d7' : 'none')};
`;

const PickButton = styled.button`
  display: flex;
  align-items: center;
  gap: 8px;
  height: 64px;
  margin-right: 27px;
  padding: 0 16px 0 10px;
  border: 0;
  background: #0696d7;
  color: #fff;
`;

const Divider = styled.hr`
  align-self: stretch;
  height: 2px;
  margin: 9px -45px 7px -25px;
  border: 0;
  background: #c8c8c8;
`;

const PanelFooter = styled.div`
  display: flex;
  align-items: center;
  gap: 24px;
  height: 83px;
  padding: 0 26px 0 20px;
  border: solid #c8c8c8;
  border-width: 0 2px 3px 1px;
  background: #f1f1f1;
`;

const FooterButton = styled.button`
  width: 140px;
  height: 46px;
  padding: 0;
  border: 2px solid #bdbdbd;
  background: #e8e8e8;
  color: #777;
  font-size: 28px;

  &:first-of-type {
    margin-left: auto;
  }
`;

const SelectRow = ({ id, label, value, icon }) => (
  <Row>
    <RowLabel htmlFor={id}>{label}</RowLabel>
    <Field>
      <Select id={id} defaultValue={value}><option>{value}</option></Select>
      <FieldIcon>{icon}</FieldIcon>
      <FieldCaret><Caret size={14} /></FieldCaret>
    </Field>
  </Row>
);

const EditFeature = () => {
  const [thin, setThin] = useState(false);
  const [distance, setDistance] = useState('Layer_H / 4');
  const [taper, setTaper] = useState('0 deg');

  return (
    <Panel onSubmit={(e) => e.preventDefault()}>
      <PanelHeader><FaMinusCircle size={21} color="#333" />EDIT FEATURE</PanelHeader>
      <PanelBody>
        <Row>
          <RowLabel as="span">Type</RowLabel>
          <TypeButton type="button" aria-label="Extrude" $active={!thin} onClick={() => setThin(false)}>
            <ExtrudeIcon arrow="#fff" front="#8accfb" top="#b5e0ff" side="#5aa9e0" />
          </TypeButton>
          <TypeButton type="button" aria-label="Thin extrude" $active={thin} onClick={() => setThin(true)}>
            <ThinExtrudeIcon />
          </TypeButton>
        </Row>
        <Row>
          <RowLabel as="span">Profiles</RowLabel>
          <PickButton type="button"><CursorIcon />1 selected</PickButton>
          <PlainButton type="button" aria-label="Clear profiles">
            <Icon size={20} box={20}><path d="M2 2l16 16M18 2L2 18" stroke="#555" strokeWidth="4" /></Icon>
          </PlainButton>
        </Row>
        <SelectRow
          id="start"
          label="Start"
          value="Profile Plane"
          icon={<Icon><path d="M12 1v36" stroke="#1b3765" strokeWidth="4" /><path d="M14 19h12" stroke="#111" strokeWidth="2" /><path d="M24 13l7 6-7 6z" fill="#111" /></Icon>}
        />
        <SelectRow
          id="direction"
          label="Direction"
          value="One Side"
          icon={<Icon><path d="M13 1l23 9v16l-23-9z" fill="#f4b183" stroke="#d99b6e" /><path d="M25 12L5 32" stroke="#444" strokeWidth="3" /><path d="M1 36V25l9 9z" fill="#444" /></Icon>}
        />
        <SelectRow
          id="extent"
          label="Extent Type"
          value="Distance"
          icon={<Icon><path d="M2 0v38M36 0v38" stroke="#1b3765" strokeWidth="4" /><path d="M6 19h26" stroke="#222" strokeWidth="2" /><path d="M4 19l6-5v10zM34 19l-6-5v10z" fill="#222" /></Icon>}
        />
        <Row>
          <RowLabel htmlFor="distance">Distance</RowLabel>
          <Field>
            <TextInput id="distance" value={distance} onChange={(e) => setDistance(e.target.value)} />
            <FxHint>fx</FxHint>
          </Field>
        </Row>
        <Row>
          <RowLabel htmlFor="taper">Taper Angle</RowLabel>
          <Field>
            <TextInput id="taper" value={taper} onChange={(e) => setTaper(e.target.value)} />
          </Field>
        </Row>
        <Divider />
        <SelectRow
          id="operation"
          label="Operation"
          value="Join"
          icon={<Icon><path d="M11 2h18v12h7v21H3V14h8z" fill={BLUE} stroke="#4a8fc2" strokeWidth="2" /><path d="M11 14v10h18V14z" stroke="#5a9fd2" strokeWidth="1.5" /></Icon>}
        />
      </PanelBody>
      <PanelFooter>
        <FaInfoCircle size={28} color="#000" />
        <FooterButton type="submit">OK</FooterButton>
        <FooterButton type="button">Cancel</FooterButton>
      </PanelFooter>
    </Panel>
  );
};

/* ---------- things floating over the canvas ---------- */

const ValueBox = styled.div`
  position: absolute;
  top: 723px;
  left: calc(50% + 98px);
  padding: 4px;
  background: #f1f1f1;

  div {
    padding: 6px 12px 8px;
    border: 2px solid #cfcfcf;
    background: #fff;
  }
  input {
    display: block;
    width: 135px;
    height: 30px;
    padding: 0 1px;
    border: 0;
    background: #25808f;
    color: #e9f6f8;
    font-size: 25px;
    line-height: 30px;
  }
`;

const Tooltip = styled.div`
  position: absolute;
  top: 3px;
  left: 186px;
  width: 89px;
  border-radius: 14px;
  background: #505050;
  color: #fff;
  font: 600 13px/28px "Noto Sans", sans-serif;
  text-align: center;
`;

const Callout = styled.div`
  position: absolute;
  z-index: 3;
  top: -5px;
  left: 211px;
  width: 300px;
  padding-right: 14px;
  border-radius: 44px;
  background: rgba(211, 0, 2, 0.6);
  color: #fff;
  font: 600 39px/88px "Noto Sans", "Noto Sans CJK KR", sans-serif;
  text-align: center;
  white-space: nowrap;
`;

const Watermark = styled.svg`
  position: absolute;
  z-index: 3;
  top: 322px;
  left: 25%;
  width: 50%;
  height: 134px;
  pointer-events: none;

  text {
    font: 600 72px "Noto Sans", sans-serif;
    text-anchor: middle;
  }
`;

/* ---------- timeline ---------- */

const Timeline = styled.footer`
  display: flex;
  align-items: flex-start;
  height: 59px;
  border-top: 1px solid #ccc;
  background: linear-gradient(#f1f1f1 50px, #bdbdbd 50px, #bdbdbd 52px, #eee 52px);
`;

const Playback = styled.div`
  display: flex;
  gap: 11px;
  padding: 19px 24px 0 11px;
`;

const Steps = styled.div`
  padding-top: 8px;
`;

const PinkRun = styled.div`
  width: 361px;
  height: 7px;
  background: #fdb0b0;
`;

const StepList = styled.div`
  display: flex;
  gap: 8px;
  padding: 2px 0 0 1px;
`;

const Rail = styled.div`
  display: flex;
  width: 394px;
  height: 8px;
  margin: 2px 0 0 12px;
  border: 2px solid #c8c8c8;
  border-top: 0;
  justify-content: space-evenly;

  i {
    width: 2px;
    background: #c8c8c8;
  }
`;

const Marker = styled.svg`
  width: 12px;
  height: 38px;
  margin: 11px auto 0 0;
`;

const SettingsButton = styled(PlainButton)`
  margin: 19px 17px 0 0;
`;

const play = [
  ['Go to start', 'M1 2h2v14H1zM14 2v14L4 9z'],
  ['Step back', 'M12 2v14L1 9zM13 6h4v6h-4z'],
  ['Play', 'M3 0l13 9L3 18z'],
  ['Step forward', 'M6 2v14l11-7zM1 6h4v6H1z'],
  ['Go to end', 'M15 2h2v14h-2zM4 2v14l10-7z'],
];

const small = { size: 20 };
const steps = [
  <SketchSmall />, <PlaneIcon {...small} />, <SketchSmall />, <SketchSmall />,
  <Icon {...small}>
    <path d="M2 20l8-6h12v22H2z" fill="#ddd" stroke="#999" />
    <path d="M8 16L22 2l15 16-14 15z" fill="#e8955b" />
    <path d="M17 16l8-6v18l-8 4z" fill="#7cbf8b" />
  </Icon>,
  <SketchSmall />, <ExtrudeIcon {...small} />, <ExtrudeIcon {...small} />, <ExtrudeIcon {...small} />,
  <Icon {...small}>
    <circle cx="19" cy="5" r="5" fill={BLUE} />
    <circle cx="31" cy="12" r="5" fill={BLUE} />
    <circle cx="31" cy="25" r="5" fill={BLUE} />
    <circle cx="19" cy="33" r="5" fill={BLUE} />
    <circle cx="7" cy="25" r="5" fill={BLUE} />
    <circle cx="7" cy="12" r="4" fill="#fff" stroke={LINE} />
  </Icon>,
  <PatternIcon {...small} />, <ExtrudeIcon {...small} />, <ExtrudeIcon {...small} />,
  <ShellIcon {...small} opacity={0.3} />, <SketchSmall faded />,
];

const App = () => (
  <>
    <GlobalStyle />
    <Window>
      <TopBars />
      <RibbonBar />
      <Viewport>
        <Canvas />
        <Browser />
        <Column>
          <Notice>
            <Lock color="#dc2020" size={18} plain />
            <b>Read-Only:</b>
            Document limit has been reached
            <a href="#documents">My Editable Documents</a>
          </Notice>
        </Column>
        <RightColumn>
          <ViewCube viewBox="0 0 84 100">
            <path d="M27 64l25 22 24-20v5L52 92z" fill="#000" opacity=".18" />
            <path d="M52 21l26 13-26 15-27-15z" fill="#f5f5f5" stroke="#777" />
            <path d="M25 34l27 15v32L27 64z" fill="#ececec" stroke="#777" />
            <path d="M78 34L52 49v32l24-17z" fill="#dedede" stroke="#777" />
            <path d="M24 28l3 36" stroke="#6a6ae8" strokeWidth="2" />
            <path d="M27 64l27 22" stroke="#d07070" strokeWidth="2" />
            <g fontSize="8" fill="#777">
              <text transform="matrix(.87 .5 -.87 .5 47 32)">TOP</text>
              <text transform="matrix(.87 .5 0 1 28 55)" fontSize="7">FRONT</text>
              <text transform="matrix(.87 -.5 0 1 55 68)" fontSize="7">RIGHT</text>
            </g>
            <text x="19" y="27" fontSize="12" fill="#7777ee">Z</text>
            <text x="57" y="93" fontSize="12" fill="#f08080">X</text>
          </ViewCube>
          <EditFeature />
        </RightColumn>
        <SideHeader $bottom>
          <span>COMMENTS</span>
          <FaPlusCircle size={11} color="#333" />
        </SideHeader>
        <NavTools />
        <ValueBox>
          <div><input aria-label="Distance value" defaultValue="Layer_H / 4" /></div>
        </ValueBox>
        <Tooltip>Extrude</Tooltip>
        <Callout>Extrude 선택</Callout>
        <Watermark>
          <mask id="cut">
            <rect width="100%" height="100%" fill="#fff" />
            <text x="50%" y="91" fill="#000">22ww.tistory.com</text>
          </mask>
          <rect width="100%" height="100%" fill="rgba(0, 175, 238, 0.3)" mask="url(#cut)" />
          <text x="50%" y="91" fill="rgba(255, 255, 255, 0.42)">22ww.tistory.com</text>
        </Watermark>
      </Viewport>
      <Timeline>
        <Playback>
          {play.map(([label, d]) => (
            <PlainButton key={label} aria-label={label}>
              <Icon size={18} box={18}><path d={d} fill="#606060" /></Icon>
            </PlainButton>
          ))}
        </Playback>
        <Steps>
          <PinkRun />
          <StepList>
            {steps.map((icon, index) => (
              <PlainButton key={index} aria-label={`Step ${index + 1}`}>{icon}</PlainButton>
            ))}
          </StepList>
          <Rail>
            {steps.slice(2).map((_, index) => <i key={index} />)}
          </Rail>
        </Steps>
        <Marker viewBox="2 0 12 38">
          <path d="M2 0h12v6l-4 4H6L2 6z" fill="#555" />
          <path d="M8 8v30" stroke="#555" strokeWidth="2" />
        </Marker>
        <SettingsButton aria-label="Timeline settings"><FaCog size={17} color="#666" /></SettingsButton>
      </Timeline>
    </Window>
  </>
);

export default App;
